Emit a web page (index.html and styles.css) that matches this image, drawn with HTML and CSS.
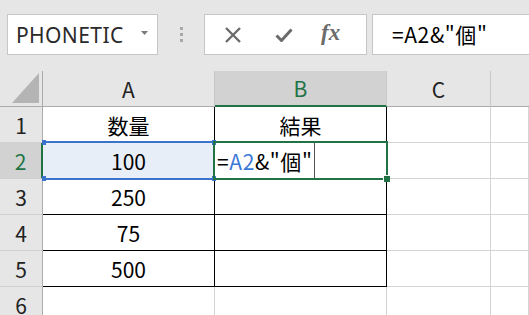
FILE: index.html
```html
<!DOCTYPE html>
<html lang="ja">
<head>
    <meta charset="UTF-8">
    <title>Excel - PHONETIC</title>
    <link rel="stylesheet" href="styles.css">
</head>
<body>
    <div class="toolbar">
        <div class="name-box">
            <span>PHONETIC</span>
            <svg class="drop" width="7" height="4" viewBox="0 0 7 4"><path d="M0 0h7L3.5 4z" fill="#7a7a7a"/></svg>
        </div>
        <div class="grip"><i></i><i></i><i></i></div>
        <div class="buttons">
            <svg class="icon" width="18" height="18" viewBox="0 0 18 18"><path d="M2 2l14 14M16 2L2 16" stroke="#6b6b6b" stroke-width="2.4" fill="none"/></svg>
            <svg class="icon" width="18" height="14" viewBox="0 0 18 14"><path d="M1.5 7.5l5 5L16.5 1.5" stroke="#6b6b6b" stroke-width="3" fill="none"/></svg>
            <span class="fx">fx</span>
        </div>
        <div class="formula">=A2&amp;"個"</div>
    </div>

    <div class="sheet">
        <div class="hd corner"><svg width="27" height="30" viewBox="0 0 27 30"><path d="M27 0V30H0z" fill="#b4b4b4"/></svg></div>
        <div class="hd col">A</div>
        <div class="hd col active-col">B</div>
        <div class="hd col">C</div>
        <div class="hd col last"></div>

        <div class="hd row">1</div>
        <div class="cell boxed">数量</div>
        <div class="cell boxed">結果</div>
        <div class="cell"></div>
        <div class="cell"></div>

        <div class="hd row active-row">2</div>
        <div class="cell boxed sel">100</div>
        <div class="cell boxed edit">=<span class="ref">A2</span>&amp;"個"<span class="caret"></span></div>
        <div class="cell"></div>
        <div class="cell"></div>

        <div class="hd row">3</div>
        <div class="cell boxed">250</div>
        <div class="cell boxed"></div>
        <div class="cell"></div>
        <div class="cell"></div>

        <div class="hd row">4</div>
        <div class="cell boxed">75</div>
        <div class="cell boxed"></div>
        <div class="cell"></div>
        <div class="cell"></div>

        <div class="hd row">5</div>
        <div class="cell boxed">500</div>
        <div class="cell boxed"></div>
        <div class="cell"></div>
        <div class="cell"></div>

        <div class="hd row">6</div>
        <div class="cell"></div>
        <div class="cell"></div>
        <div class="cell"></div>
        <div class="cell"></div>

        <!-- range highlight A2 and active cell B2 -->
        <div class="range-a2">
            <span class="handle tl"></span><span class="handle tr"></span>
            <span class="handle bl"></span><span class="handle br"></span>
        </div>
        <div class="active-b2"><span class="fill-handle"></span></div>
    </div>
</body>
</html>
```

FILE: styles.css
```css
* {
    box-sizing: border-box;
}
html, body {
    margin: 0;
    width: 529px;
    height: 315px;
    overflow: hidden;
}
body {
    background-color: #e6e6e6;
    font-family: "Noto Sans CJK JP", "Noto Sans", sans-serif;
    color: #000;
}
.toolbar {
    height: 71px;
    display: flex;
    align-items: flex-start;
    padding: 14px 0 0 7px;
}
.toolbar > * {
    flex-shrink: 0;
}
.name-box {
    width: 151px;
    height: 41px;
    background-color: #fff;
    border: 1px solid #c6c6c6;
    display: flex;
    align-items: center;
    padding-left: 8px;
    font-family: "Noto Sans", sans-serif;
    font-size: 21px;
    letter-spacing: 0.4px;
    color: #2a2a2a;
}
.name-box span {
    flex: 1;
}
.name-box .drop {
    margin-right: 9px;
    margin-top: -4px;
}
.grip {
    width: 46px;
    height: 41px;
    display: flex;
    flex-direction: column;
    align-items: center;
    justify-content: center;
    gap: 3px;
}
.grip i {
    display: block;
    width: 3px;
    height: 3px;
    background-color: #a8a8a8;
}
.buttons {
    width: 163px;
    height: 41px;
    background-color: #fff;
    border: 1px solid #c6c6c6;
    display: flex;
    align-items: center;
    padding-left: 19px;
}
.buttons .icon:first-child {
    margin-right: 33px;
}
.buttons .icon:nth-child(2) {
    margin-right: 28px;
}
.fx {
    font-family: "Liberation Serif", serif;
    font-style: italic;
    font-weight: bold;
    font-size: 23px;
    color: #6b6b6b;
    margin-top: -3px;
}
.formula {
    flex: 1 1 auto;
    flex-shrink: 1;
    margin-left: 5px;
    height: 41px;
    background-color: #fff;
    border: 1px solid #c6c6c6;
    border-right: none;
    padding-left: 19px;
    font-size: 21px;
    letter-spacing: 0.6px;
    line-height: 38px;
}
.sheet {
    position: relative;
    display: grid;
    grid-template-columns: 43px 172px 172px 104px 1fr;
    grid-auto-rows: 36px;
    background-color: #fff;
    font-size: 21px;
}
.hd {
    background-color: #e6e6e6;
    display: flex;
    align-items: center;
    justify-content: center;
    border-right: 1px solid #c8c8c8;
    border-bottom: 1px solid #c8c8c8;
    color: #222;
}
.corner {
    align-items: flex-end;
    justify-content: flex-end;
    padding: 0 3px 3px 0;
    border-right-color: #ababab;
    border-bottom-color: #ababab;
}
.col {
    border-bottom-color: #ababab;
}
.col.last {
    border-right: none;
}
.row {
    border-right-color: #ababab;
    border-bottom-color: #d0d0d0;
}
.active-col {
    background-color: #d2d2d2;
    color: #217346;
    border-bottom: 2px solid #217346;
}
.active-row {
    background-color: #d2d2d2;
    color: #217346;
    border-right: 2px solid #217346;
}
.cell {
    display: flex;
    align-items: center;
    justify-content: center;
    border-right: 1px solid #d4d4d4;
    border-bottom: 1px solid #d4d4d4;
}
.cell.boxed {
    border-right-color: #000;
    border-bottom-color: #000;
}
.cell.sel {
    background-color: #e8eef8;
}
.cell.edit {
    justify-content: flex-start;
    padding-left: 2px;
    letter-spacing: 0.6px;
}
.ref {
    color: #3c78d8;
}
.caret {
    align-self: stretch;
    width: 1px;
    margin-left: 1px;
    background-color: #555;
}
.range-a2 {
    position: absolute;
    left: 43px;
    top: 70px;
    width: 172px;
    height: 39px;
    border-top: 2px solid #3a72cc;
    border-bottom: 2px solid #3a72cc;
}
.handle {
    position: absolute;
    width: 4px;
    height: 5px;
    background-color: #3a72cc;
}
.handle.tl { left: -1px; top: -3px; }
.handle.tr { right: -1px; top: -3px; }
.handle.bl { left: -1px; bottom: -3px; }
.handle.br { right: -1px; bottom: -3px; }
.active-b2 {
    position: absolute;
    left: 213px;
    top: 70px;
    width: 175px;
    height: 39px;
    border: 2px solid #217346;
}
.fill-handle {
    position: absolute;
    right: -4px;
    bottom: -4px;
    width: 7px;
    height: 7px;
    background-color: #217346;
    border-left: 1px solid #fff;
    border-top: 1px solid #fff;
}
```
